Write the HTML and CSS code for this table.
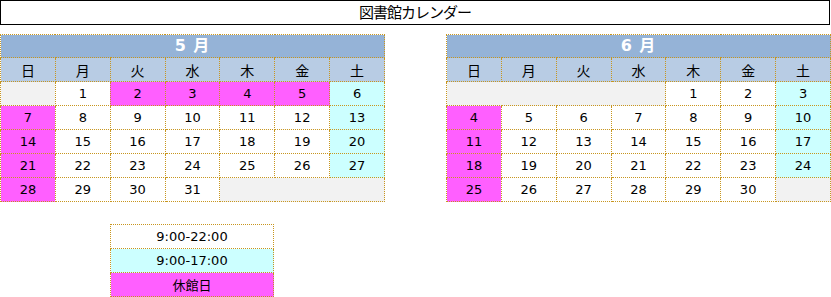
FILE: index.html
```html
<!DOCTYPE html>
<html lang="ja">
<head>
<meta charset="utf-8">
<link rel="stylesheet" href="styles.css">
</head>
<body>
<div class="title">図書館カレンダー</div>
<div class="months">
  <table class="cal">
    <tr><th class="mh" colspan="7">5 月</th></tr>
    <tr class="dow"><td>日</td><td>月</td><td>火</td><td>水</td><td>木</td><td>金</td><td>土</td></tr>
    <tr><td class="gray"></td><td>1</td><td class="off">2</td><td class="off">3</td><td class="off">4</td><td class="off">5</td><td class="sat">6</td></tr>
    <tr><td class="off">7</td><td>8</td><td>9</td><td>10</td><td>11</td><td>12</td><td class="sat">13</td></tr>
    <tr><td class="off">14</td><td>15</td><td>16</td><td>17</td><td>18</td><td>19</td><td class="sat">20</td></tr>
    <tr><td class="off">21</td><td>22</td><td>23</td><td>24</td><td>25</td><td>26</td><td class="sat">27</td></tr>
    <tr><td class="off">28</td><td>29</td><td>30</td><td>31</td><td class="gray" colspan="3"></td></tr>
  </table>
  <table class="cal">
    <tr><th class="mh" colspan="7">6 月</th></tr>
    <tr class="dow"><td>日</td><td>月</td><td>火</td><td>水</td><td>木</td><td>金</td><td>土</td></tr>
    <tr><td class="gray" colspan="4"></td><td>1</td><td>2</td><td class="sat">3</td></tr>
    <tr><td class="off">4</td><td>5</td><td>6</td><td>7</td><td>8</td><td>9</td><td class="sat">10</td></tr>
    <tr><td class="off">11</td><td>12</td><td>13</td><td>14</td><td>15</td><td>16</td><td class="sat">17</td></tr>
    <tr><td class="off">18</td><td>19</td><td>20</td><td>21</td><td>22</td><td>23</td><td class="sat">24</td></tr>
    <tr><td class="off">25</td><td>26</td><td>27</td><td>28</td><td>29</td><td>30</td><td class="gray"></td></tr>
  </table>
</div>
<table class="legend">
  <tr><td>9:00-22:00</td></tr>
  <tr><td class="sat">9:00-17:00</td></tr>
  <tr><td class="off">休館日</td></tr>
</table>
</body>
</html>
```
FILE: styles.css
```css
html, body {
  margin: 0;
  padding: 0;
  background: #fff;
  font-family: "DejaVu Sans", "Noto Sans CJK JP", sans-serif;
  color: #000;
}

.title {
  box-sizing: border-box;
  width: 830px;
  height: 25px;
  border: 1px solid #000;
  text-align: center;
  font-family: "Noto Sans CJK JP", sans-serif;
  font-size: 15px;
  line-height: 22px;
  letter-spacing: -1px;
}

.months {
  display: flex;
  gap: 61px;
  margin-top: 9px;
}

.cal, .legend {
  border-collapse: collapse;
  table-layout: fixed;
}

.cal {
  width: 385px;
}

.cal td, .cal th, .legend td {
  border: 1px dotted #c8961e;
  padding: 0;
  text-align: center;
  font-size: 13px;
  height: 23px;
  line-height: 16px;
}

.cal th.mh {
  background: #95b3d7;
  color: #fff;
  font-weight: bold;
  font-size: 16px;
  height: 22px;
  letter-spacing: 1px;
}

.cal .dow td {
  background: #b8cce4;
  font-family: "Noto Sans CJK JP", sans-serif;
  font-size: 14px;
}

.off {
  background: #ff5fff;
}

.sat {
  background: #ccffff;
}

.gray {
  background: #f2f2f2;
}

.legend {
  width: 164px;
  margin-top: 22px;
  margin-left: 110px;
}

.legend td {
  font-size: 13px;
}

.legend td.off {
  font-family: "Noto Sans CJK JP", sans-serif;
}
```
